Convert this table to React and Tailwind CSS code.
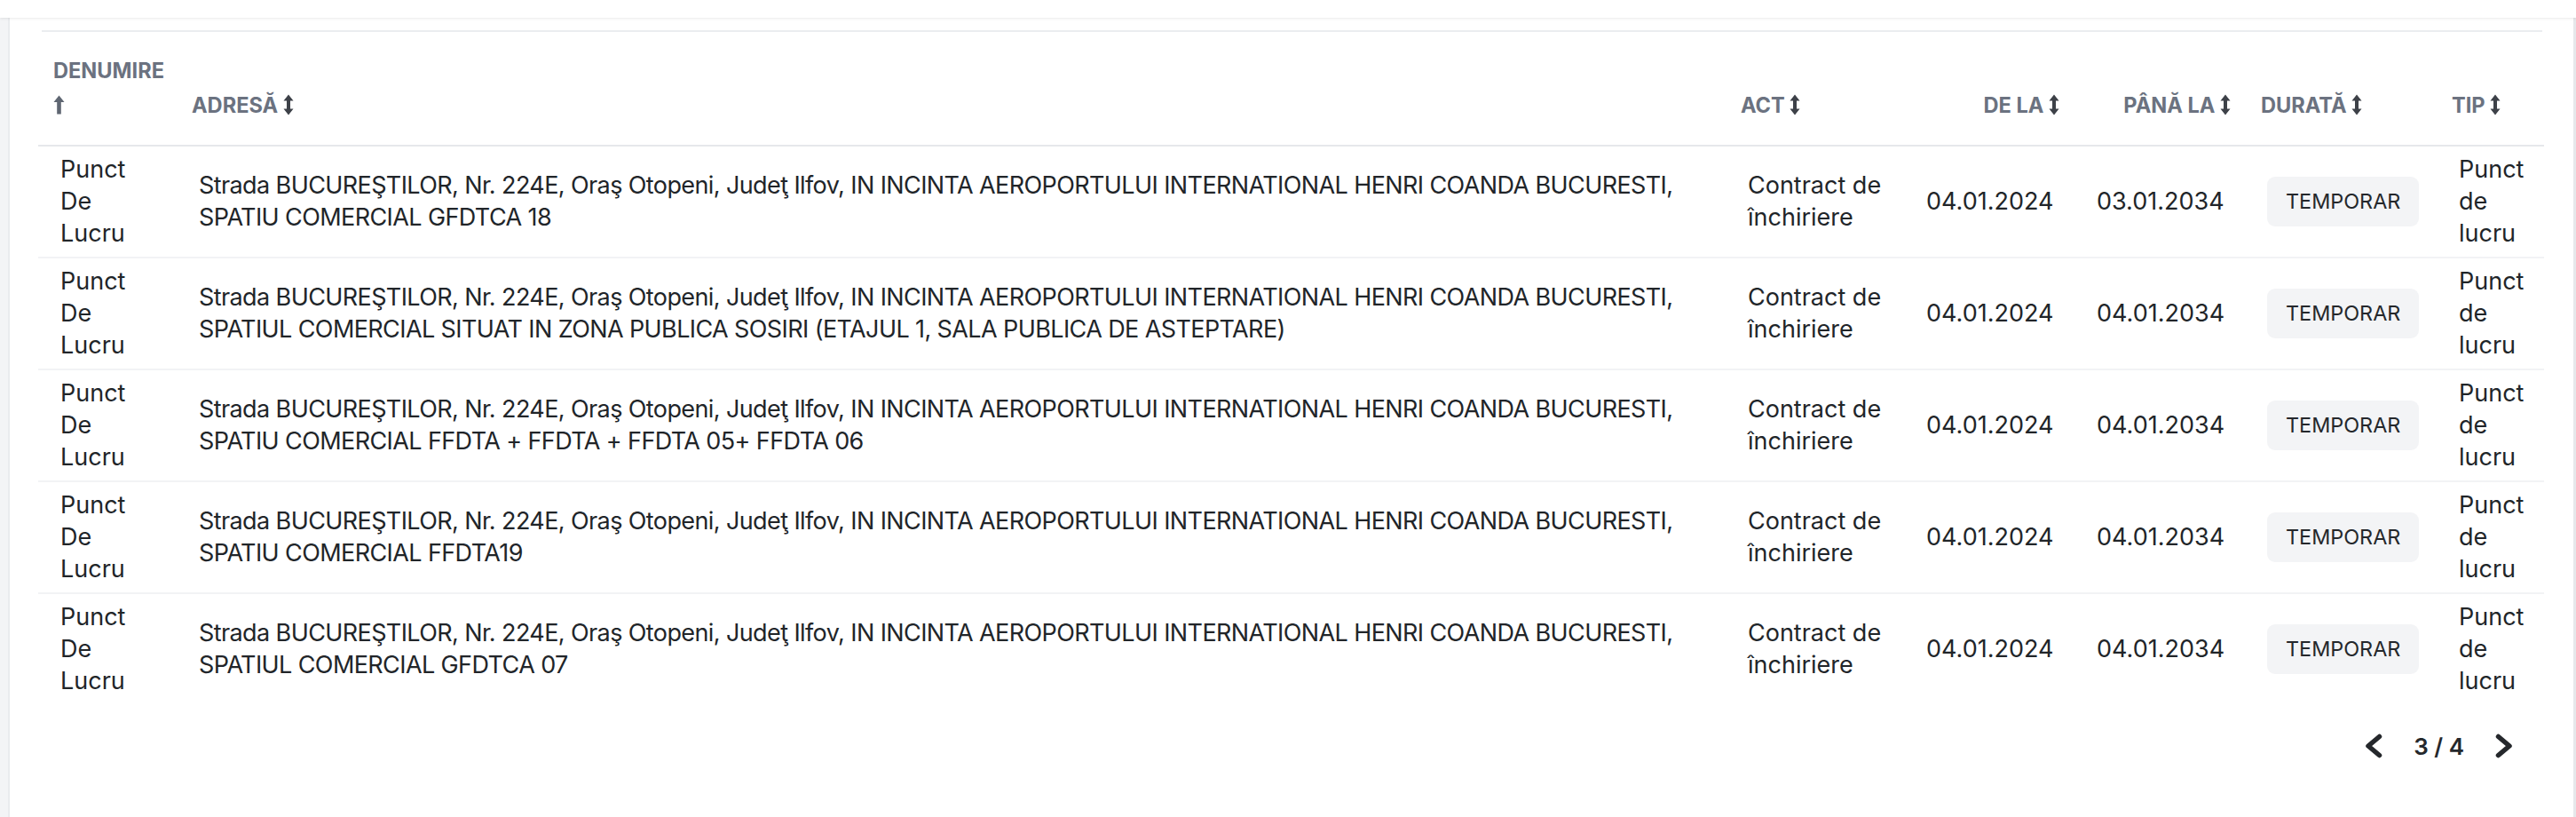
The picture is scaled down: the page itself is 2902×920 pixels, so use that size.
import React from "react";

const ADDR =
  "Strada BUCUREŞTILOR, Nr. 224E, Oraş Otopeni, Judeţ Ilfov, IN INCINTA AEROPORTULUI INTERNATIONAL HENRI COANDA BUCURESTI, ";

const rows = [
  { addr: ADDR + "SPATIU COMERCIAL GFDTCA 18", from: "04.01.2024", to: "03.01.2034" },
  { addr: ADDR + "SPATIUL COMERCIAL SITUAT IN ZONA PUBLICA SOSIRI (ETAJUL 1, SALA PUBLICA DE ASTEPTARE)", from: "04.01.2024", to: "04.01.2034" },
  { addr: ADDR + "SPATIU COMERCIAL FFDTA + FFDTA + FFDTA 05+ FFDTA 06", from: "04.01.2024", to: "04.01.2034" },
  { addr: ADDR + "SPATIU COMERCIAL FFDTA19", from: "04.01.2024", to: "04.01.2034" },
  { addr: ADDR + "SPATIUL COMERCIAL GFDTCA 07", from: "04.01.2024", to: "04.01.2034" },
];

function SortBoth() {
  return (
    <svg viewBox="0 0 12 24" className="inline-block w-[12px] h-[24px] align-[-3px] text-[#3d4148]" fill="currentColor">
      <path d="M6 0.5 L11.5 7.5 H8 V16.5 H11.5 L6 23.5 L0.5 16.5 H4 V7.5 H0.5 Z" />
    </svg>
  );
}

function SortUp() {
  return (
    <svg viewBox="0 0 13 22" className="inline-block w-[13px] h-[22px] align-[-2px] text-[#5f6672]" fill="currentColor">
      <path d="M6.5 0.5 L12.5 8 H8.8 V21.5 H4.2 V8 H0.5 Z" />
    </svg>
  );
}

function Th({ children, right }) {
  return (
    <th
      className={
        "align-bottom px-[17px] pt-[24px] pb-[25px] font-bold uppercase text-[23.6px] leading-[39px] text-[#6b7280] " +
        (right ? "text-right" : "text-left")
      }
    >
      {children}
    </th>
  );
}

function Chevron({ dir }) {
  return (
    <svg viewBox="0 0 20 28" className="w-[20px] h-[28px] text-[#25282c]" fill="none" stroke="currentColor" strokeWidth="5.5" strokeLinecap="round" strokeLinejoin="round">
      {dir === "left" ? <polyline points="16.5,3.5 4,14 16.5,24.5" /> : <polyline points="3.5,3.5 16,14 3.5,24.5" />}
    </svg>
  );
}

export default function App() {
  return (
    <div className="w-[2902px] h-[920px] overflow-hidden bg-white flex flex-col" style={{ fontFamily: "Inter, 'Noto Sans', sans-serif" }}>
      <div className="h-[20px] bg-white shrink-0 relative z-10 shadow-[0_1px_3px_rgba(0,0,0,0.09)]" />
      <div className="flex flex-1 min-h-0">
        <div className="w-[11px] bg-[#f3f4f6] border-r-2 border-[#e9ebee] shrink-0" />
        <div className="flex-1 bg-white pl-[32px] pr-[31px]">
          <div className="mx-[4px] mt-[14px] h-[2px] bg-[#ebedf0]" />
          <table className="table-fixed w-[2823px] border-collapse text-[#212529]">
            <colgroup>
              <col className="w-[156px]" />
              <col className="w-[1745px]" />
              <col className="w-[201px]" />
              <col className="w-[192px]" />
              <col className="w-[193px]" />
              <col className="w-[215px]" />
              <col className="w-[121px]" />
            </colgroup>
            <thead>
              <tr className="border-b-2 border-[#e6e8eb]">
                <Th>
                  DENUMIRE <SortUp />
                </Th>
                <Th>
                  ADRESĂ <SortBoth />
                </Th>
                <Th>
                  ACT <SortBoth />
                </Th>
                <Th right>
                  DE LA <SortBoth />
                </Th>
                <Th right>
                  PÂNĂ LA <SortBoth />
                </Th>
                <Th>
                  DURATĂ <SortBoth />
                </Th>
                <Th>
                  TIP <SortBoth />
                </Th>
              </tr>
            </thead>
            <tbody className="text-[27px] leading-[36px]">
              {rows.map((r, i) => (
                <tr key={i} className={i < rows.length - 1 ? "border-b-2 border-[#f2f3f5]" : ""}>
                  <td className="align-middle px-[25px] py-[8px]">Punct De Lucru</td>
                  <td className="align-middle px-[25px] py-[8px] tracking-[-0.6px]">{r.addr}</td>
                  <td className="align-middle px-[25px] py-[8px]">Contract de închiriere</td>
                  <td className="align-middle px-[25px] py-[8px] text-right">{r.from}</td>
                  <td className="align-middle px-[25px] py-[8px] text-right">{r.to}</td>
                  <td className="align-middle pl-[24px] pr-[20px] py-[8px]">
                    <span className="inline-block bg-[#f3f4f6] rounded-[9px] px-[21px] h-[56px] leading-[56px] text-[23.4px] text-[#25282c]">TEMPORAR</span>
                  </td>
                  <td className="align-middle px-[25px] py-[8px]">Punct de lucru</td>
                </tr>
              ))}
            </tbody>
          </table>
          <div className="flex justify-end items-center pr-[37px] mt-[27px] h-[40px]">
            <Chevron dir="left" />
            <span className="mx-[35px] text-[26px] font-semibold text-[#25282c]">3 / 4</span>
            <Chevron dir="right" />
          </div>
        </div>
        <div className="w-[3px] bg-[#e6e8eb] shrink-0" />
      </div>
    </div>
  );
}
